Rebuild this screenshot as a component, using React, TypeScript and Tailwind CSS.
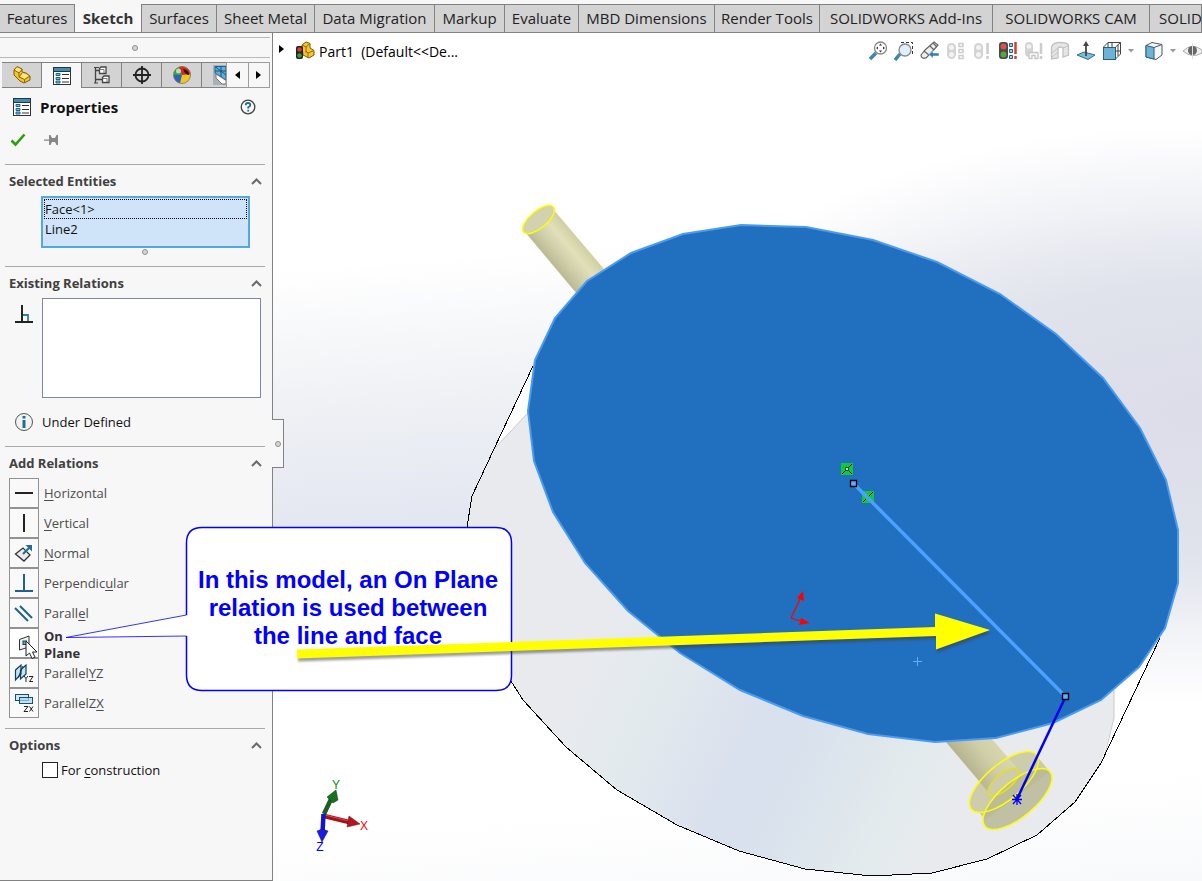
import { useState } from "react";
import type { ReactNode } from "react";

const tabs = [
  { name: "Features", width: "w-[75px]" },
  { name: "Sketch", width: "w-[67px]" },
  { name: "Surfaces", width: "w-[75px]" },
  { name: "Sheet Metal", width: "w-[98px]" },
  { name: "Data Migration", width: "w-[120px]" },
  { name: "Markup", width: "w-[70px]" },
  { name: "Evaluate", width: "w-[74px]" },
  { name: "MBD Dimensions", width: "w-[136px]" },
  { name: "Render Tools", width: "w-[105px]" },
  { name: "SOLIDWORKS Add-Ins", width: "w-[173px]" },
  { name: "SOLIDWORKS CAM", width: "w-[157px]" },
  { name: "SOLID", width: "min-w-[52px] flex-1 pl-[9px] text-left" },
];

const Icon = ({ size = 20, children }: { size?: number; children: ReactNode }) => (
  <svg width={size} height={size} viewBox="0 0 20 20" fill="none" className="block shrink-0" aria-hidden="true">
    {children}
  </svg>
);

const PartIcon = () => (
  <Icon>
    <path d="M2 5 L5 1.500 L10 4 L10 7 L14 8 L18 11 V15 L12 18 L8 16 L2 10 Z" fill="#f5c52b" stroke="#7d5b0b" />
    <path d="M3 5 L5.500 2.500 L9 4.500 L7 7.500 Z M8 11 L10 8 L16.500 10.500 L12.500 14 Z" fill="#ffe680" />
    <path d="M2 5 L7 8 L7 12 L12.500 14.500 L12.500 18 M7 8 L10 4.500 M7 12 L10 8 M12.500 14.500 L18 11" stroke="#8f6a10" />
  </Icon>
);

const PropertiesIcon = () => (
  <Icon>
    <rect x="1.500" y="1.500" width="17" height="17" fill="#fff" stroke="#2f3338" />
    <rect x="2" y="2" width="16" height="3" fill="#3b8fb8" />
    <path d="M2 5.500 H18" stroke="#2f3338" />
    <path d="M4 7.500h4v2h-4z M4 11.500h4v2h-4z M4 15h4v2h-4z" fill="#7cc4e2" stroke="#1d6386" />
    <path d="M10 8.500 H17 M10 12.500 H17 M10 16 H17" stroke="#333" />
  </Icon>
);

const TreeIcon = () => (
  <Icon>
    <path d="M3.500 2 V18 M3.500 5.500 H8 M3.500 14.500 H10" stroke="#444" strokeWidth="1.300" />
    <path d="M2 2.500 H7 M2 18 H6" stroke="#444" />
    <path d="M7.500 3.500 L9 2 H14 V8.500 H7.500 Z M10.500 12.500 L12 11 H17 V17.500 H10.500 Z" fill="#fff" stroke="#444" strokeWidth="1.300" />
    <path d="M7.500 4.500 H12 V8 M10.500 13.500 H15 V17" stroke="#777" />
  </Icon>
);

const TargetIcon = () => (
  <Icon>
    <circle cx="10" cy="10" r="6.500" stroke="#222" strokeWidth="1.800" />
    <path d="M10 1 V19 M1 10 H19" stroke="#222" strokeWidth="1.800" />
  </Icon>
);

const AppearanceIcon = () => (
  <Icon>
    <circle cx="10" cy="10" r="8.500" fill="#f3c51d" />
    <path d="M10 10 L1.500 10 A8.500 8.500 0 0 1 8 2 Z" fill="#2fa34a" />
    <path d="M10 10 L7 2 A8.500 8.500 0 0 1 18.500 9 Z" fill="#d8281f" />
    <path d="M10 10 L1.500 10 A8.500 8.500 0 0 0 8 18.300 Z" fill="#2a62c4" />
    <path d="M11 4 Q16 4 17.500 10 Q13 10 11 4 Z" fill="#3a1010" />
    <circle cx="10" cy="10" r="8.500" stroke="#775" strokeWidth="0.800" />
    <circle cx="6.500" cy="6" r="2.500" fill="#fff" opacity="0.650" />
  </Icon>
);

const CamIcon = () => (
  <svg width="13" height="20" viewBox="0 0 13 20" fill="none" className="block" aria-hidden="true">
    <path d="M0 0 H13 V20 H0 Z" fill="#a9b0b8" />
    <path d="M2 1.500 H13 V15 L2 8 Z" fill="#5fb0dc" stroke="#25648a" />
    <path d="M2 1.500 L13 10 M8 1 V12 M2 6 H13" stroke="#1d5476" />
    <path d="M3 9 L13 15.500 V19 H9 L3 13 Z" fill="#fff" stroke="#777" />
  </svg>
);

const managerTabs = [
  { name: "Feature manager", icon: <PartIcon /> },
  { name: "Property manager", icon: <PropertiesIcon /> },
  { name: "Configuration manager", icon: <TreeIcon /> },
  { name: "Dimension manager", icon: <TargetIcon /> },
  { name: "Display manager", icon: <AppearanceIcon /> },
];

const OnPlaneIcon = () => (
  <Icon>
    <path d="M5.500 6.500 L15 3 V14 L5.500 17 Z" fill="#f2f2f2" stroke="#333" />
    <rect x="9" y="8" width="3.500" height="3.500" fill="#5aa7cc" stroke="#12455f" />
  </Icon>
);

const ParallelYZIcon = () => (
  <Icon>
    <path d="M1.500 7 L7 2 V11 L1.500 17 Z M6.500 7 L12 2 V11 L6.500 16 Z" fill="#b8deee" fillOpacity="0.800" stroke="#123f5a" strokeWidth="1.200" />
    <path d="M4 15 L9 3" stroke="#123f5a" />
    <path d="M10 13 l2 2.500 l2 -2.500 M12 15.500 V19 M15 13.500 H19 L15.500 18.500 H19" stroke="#222" />
  </Icon>
);

const ParallelZXIcon = () => (
  <Icon>
    <rect x="1.500" y="1.500" width="13" height="6" fill="#cfe8f5" stroke="#15516f" />
    <rect x="5.500" y="4.500" width="13" height="6" fill="#a9d8ee" fillOpacity="0.700" stroke="#15516f" />
    <path d="M10 13.500 H14 L10 18.500 H14 M15.500 13.500 L19 18.500 M19 13.500 L15.500 18.500" stroke="#222" />
  </Icon>
);

// before / key / after: the key letter is underlined
const relations = [
  { before: "", key: "H", after: "orizontal", icon: <Icon><path d="M1 10 H19" stroke="#222" strokeWidth="2" /></Icon> },
  { before: "", key: "V", after: "ertical", icon: <Icon><path d="M10 1 V19" stroke="#222" strokeWidth="2" /></Icon> },
  {
    before: "", key: "N", after: "ormal",
    icon: (
      <Icon>
        <path d="M1.500 11 L9 5 L16 12 L10 18 Z" fill="#ececec" stroke="#333" strokeWidth="1.300" />
        <path d="M9 11 L15 5" stroke="#1f6f94" strokeWidth="2.200" />
        <path d="M11.500 2 H18 V8.500 Z" fill="#1f6f94" />
      </Icon>
    ),
  },
  { before: "Perpendic", key: "u", after: "lar", icon: <Icon><path d="M10 1 V18 M1 18 H19" stroke="#1f6385" strokeWidth="2" /></Icon> },
  { before: "Parall", key: "e", after: "l", icon: <Icon><path d="M1 5 L14 18 M6 3 L18 15" stroke="#1f6385" strokeWidth="2" /></Icon> },
  { before: "", key: "", after: "On Plane", icon: <OnPlaneIcon />, active: true },
  { before: "Parallel", key: "Y", after: "Z", icon: <ParallelYZIcon /> },
  { before: "ParallelZ", key: "X", after: "", icon: <ParallelZXIcon /> },
];

const Section = ({ title, children }: { title: string; children: ReactNode }) => {
  const [open, setOpen] = useState(true);

  return (
    <section className="ml-[5px] mr-[7px] border-t border-[#a8a8a8] pb-[10px]">
      <button onClick={() => setOpen(!open)} className="flex h-[31px] w-full items-center justify-between pl-1 pr-[3px] pt-[2px] text-[13px] font-bold text-[#404040]">
        {title}
        <svg width="11" height="7" viewBox="0 0 11 7" fill="none" aria-hidden="true">
          <path d="M1 6 L5.500 1.500 L10 6" stroke="#6b6b6b" strokeWidth="2" />
        </svg>
      </button>
      {open && children}
    </section>
  );
};

const Dot = () => <span className="block size-[6px] rounded-full border border-[#8f8f8f] bg-[#d6d6d6]" />;

const PropertyPanel = () => {
  const [construction, setConstruction] = useState(false);

  return (
    <aside className="relative z-10 w-[273px] shrink-0 border-b border-r border-[#828282] bg-[#f7f7f7] text-[13px] text-[#111]">
      <div className="mr-[2px] mt-1 flex h-[21px] items-center justify-center border-y border-[#b9b9b9]"><Dot /></div>

      <div className="ml-[2px] mr-[2px] mt-1 flex h-[26px]">
        {managerTabs.map((tab, i) => (
          <button
            key={tab.name}
            aria-label={tab.name}
            className={`flex w-10 shrink-0 items-center justify-center border-r border-t border-[#828282] ${i === 1 ? "bg-[#f7f7f7]" : "border-b bg-[#d3d3d3]"}`}
          >
            {tab.icon}
          </button>
        ))}
        <button aria-label="CAM manager" className="flex w-6 items-center justify-end overflow-hidden border-b border-t border-[#828282] bg-[#d3d3d3]">
          <CamIcon />
        </button>
        <button aria-label="Scroll left" className="flex flex-1 items-center justify-center border border-[#9d9d9d] bg-[#f7f7f7]">
          <svg width="5" height="8" viewBox="0 0 5 8"><path d="M5 0 V8 L0 4 Z" /></svg>
        </button>
        <button aria-label="Scroll right" className="flex flex-1 items-center justify-center border-y border-r border-[#9d9d9d] bg-[#f7f7f7]">
          <svg width="5" height="8" viewBox="0 0 5 8"><path d="M0 0 V8 L5 4 Z" /></svg>
        </button>
      </div>

      <div className="flex h-[38px] items-center pl-3 pr-4">
        <PropertiesIcon />
        <h1 className="ml-2 flex-1 text-[15px] font-bold">Properties</h1>
        <button aria-label="Help">
          <svg width="16" height="16" viewBox="0 0 16 16" fill="none" className="block">
            <circle cx="8" cy="8" r="6.800" fill="#fafafa" stroke="#444" strokeWidth="1.300" />
            <path d="M5.700 6.300 Q5.700 4 8 4 Q10.300 4 10.300 6 Q10.300 7.200 8.200 8.300 V9.500 M8.200 10.700 V12.500" stroke="#1f6f94" strokeWidth="1.800" />
          </svg>
        </button>
      </div>

      <div className="mb-[10px] flex h-7 items-center gap-[18px] pl-[10px]">
        <button aria-label="OK">
          <svg width="16" height="14" viewBox="0 0 16 14" fill="none" className="block"><path d="M1.500 7.500 L5.500 11.500 L14.500 1.500" stroke="#2f9e0d" strokeWidth="2.600" /></svg>
        </button>
        <button aria-label="Keep visible">
          <svg width="14" height="12" viewBox="0 0 14 12" className="block" fill="#888">
            <path d="M0 5.500 H5 V1 H6.500 L8 4 H11 L12.500 1 H14 V11 H12.500 L11 8 H8 L6.500 11 H5 V6.800 H0 Z" />
          </svg>
        </button>
      </div>

      <Section title="Selected Entities">
        <ul role="listbox" aria-label="Selected Entities" className="ml-9 h-[52px] w-[209px] border-2 border-[#51a9e0] bg-[#cfe4f8] p-px leading-[18px]">
          <li role="option" aria-selected="true" className="border border-dotted border-black">Face&lt;1&gt;</li>
          <li role="option" aria-selected="true" className="border border-transparent">Line2</li>
        </ul>
        <div className="ml-[35px] flex h-2 w-[209px] items-center justify-center"><Dot /></div>
      </Section>

      <Section title="Existing Relations">
        <div className="flex gap-2 pl-[9px]">
          <div className="pt-[7px]">
            <Icon>
              <path d="M8 0 V17" stroke="#222" strokeWidth="2" />
              <path d="M9 10 H14 V16" stroke="#2b7fa3" strokeWidth="1.800" />
              <path d="M1 17 H19" stroke="#222" strokeWidth="2" />
            </Icon>
          </div>
          <select size={4} aria-label="Existing Relations" className="h-[100px] w-[219px] border border-[#7f88a3] bg-white" />
        </div>
        <p className="-mb-[10px] flex h-12 items-center gap-2 pl-[9px]">
          <Icon>
            <circle cx="10" cy="10" r="8.500" fill="#f2f2f2" stroke="#555" />
            <path d="M10 4 V6.500 M10 8 V16" stroke="#1f6f94" strokeWidth="3" />
          </Icon>
          <span className="pt-[2px]">Under Defined</span>
        </p>
      </Section>

      <Section title="Add Relations">
        <div className="ml-1 flex flex-col items-start text-[#4c4c4c]">
          {relations.map((rel) => (
            <button key={rel.before + rel.key + rel.after} className="flex h-[30px] items-center gap-[5px] text-left">
              <span className={`flex size-[30px] items-center justify-center border border-[#929292] ${rel.active ? "bg-white" : "bg-[#f9f9f9]"}`}>
                {rel.icon}
              </span>
              {rel.active ? (
                <span className="w-12 self-start font-bold leading-[17px] text-[#333]">{rel.after}</span>
              ) : (
                <span className="pt-[2px]">{rel.before}<span className="underline underline-offset-2">{rel.key}</span>{rel.after}</span>
              )}
            </button>
          ))}
        </div>
      </Section>

      <Section title="Options">
        <label className="ml-[37px] flex h-5 items-center gap-[3px]">
          <input
            type="checkbox"
            checked={construction}
            onChange={(e) => setConstruction(e.target.checked)}
            className="size-4 appearance-none border border-[#222] bg-white checked:bg-[#3b8fb8]"
          />
          <span className="pt-[2px]">For <span className="underline underline-offset-2">c</span>onstruction</span>
        </label>
      </Section>

      {/* Splitter handle */}
      <div className="absolute left-[272px] top-[386px] flex h-[49px] w-3 items-center justify-center border-y border-r border-[#828282] bg-[#f7f7f7]"><Dot /></div>
    </aside>
  );
};

const Caret = () => <svg width="6" height="4" viewBox="0 0 6 4" fill="#999" aria-hidden="true"><path d="M0 0 H6 L3 3.500 Z" /></svg>;

const ViewToolbar = () => (
  <div className="flex shrink-0 items-center gap-[6px]">
    <button aria-label="Zoom to fit">
      <Icon>
        <path d="M2 18 L8 12" stroke="#3d87ad" strokeWidth="3.500" />
        <circle cx="12.500" cy="7" r="6" fill="#fff" stroke="#888" strokeWidth="1.300" />
        <path d="M12.500 2.500 l1.500 2 h-3z M12.500 11.500 l1.500 -2 h-3z M8 7 l2 -1.500 v3z M17 7 l-2 -1.500 v3z" fill="#333" />
      </Icon>
    </button>
    <button aria-label="Zoom to area">
      <Icon>
        <path d="M7 1.500 H18.500 V14" stroke="#333" strokeDasharray="3 2" />
        <path d="M1 19 L6 13" stroke="#3d87ad" strokeWidth="3.500" />
        <circle cx="11" cy="9" r="6" fill="#dff0f8" stroke="#888" strokeWidth="1.300" />
      </Icon>
    </button>
    <button aria-label="Previous view">
      <Icon>
        <path d="M1 14 L5 9 L14 1 L18 4 L11 12 L6 17 Q1 18 1 14 Z" fill="#eee" stroke="#666" strokeWidth="1.200" />
        <path d="M4 10 L9 14 M10 5 L14 9 M13 2 L17 6" stroke="#666" strokeWidth="1.200" />
        <path d="M9 13.500 L13 9.500 V12 H19 V15 H13 V17.500 Z" fill="#3182ab" stroke="#fff" strokeWidth="0.500" />
      </Icon>
    </button>
    <button aria-label="Section list">
      <Icon>
        <rect x="1" y="2" width="9" height="16" rx="4.500" fill="#d4d4d4" />
        <circle cx="5.500" cy="6.500" r="2.500" fill="#f3f3f3" /><circle cx="5.500" cy="13.500" r="2.500" fill="#f3f3f3" />
        <path d="M13 2.500h4v3h-4z M13 8.500h4v3h-4z M13 14.500h4v3h-4z" stroke="#ccc" strokeWidth="1.500" />
      </Icon>
    </button>
    <button aria-label="Rebuild alert">
      <Icon>
        <rect x="2" y="2" width="9" height="16" rx="4.500" fill="#d4d4d4" />
        <circle cx="6.500" cy="6.500" r="2.500" fill="#f3f3f3" /><circle cx="6.500" cy="13.500" r="2.500" fill="#f3f3f3" />
        <path d="M15.500 2 V13 M15.500 15 V18" stroke="#ccc" strokeWidth="2.500" />
      </Icon>
    </button>
    <button aria-label="Rebuild status">
      <Icon>
        <rect x="1" y="1" width="9" height="17" rx="3" fill="#4a4a4a" />
        <circle cx="5.500" cy="5.500" r="3" fill="#dd5247" /><circle cx="5.500" cy="13.500" r="3" fill="#56a63a" />
        <path d="M11.500 2.500h3v3h-3z M11.500 8.500h3v3h-3z M11.500 14.500h3v3h-3z" fill="#9cd2ea" stroke="#245c7c" />
        <path d="M17.500 1 V13 M17.500 15 V18" stroke="#d3402f" strokeWidth="2.500" />
      </Icon>
    </button>
    <button aria-label="Dimension alert">
      <Icon>
        <rect x="1" y="1" width="8" height="15" rx="4" fill="#d4d4d4" />
        <circle cx="5" cy="5.500" r="2.300" fill="#f3f3f3" />
        <path d="M5 17.500 V11.500 H14 V17.500 H11 V14.500 H8 V17.500 Z" fill="#f7f7f7" stroke="#c6c6c6" strokeWidth="1.300" />
        <path d="M17 2 V13 M17 15 V18" stroke="#ccc" strokeWidth="2.500" />
      </Icon>
    </button>
    <button aria-label="Section view">
      <Icon>
        <path d="M1.500 6 Q3 1.500 10 1.500 Q17 1.500 18.500 4 V14 L13 16 V7 Q10 5 8 7 V17 L1.500 18 Z" fill="#e6e6e6" stroke="#c2c2c2" strokeWidth="1.300" />
        <path d="M2 12 L8 7 M2 16 L8 11 M13 7 L18 5" stroke="#c2c2c2" />
      </Icon>
    </button>
    <button aria-label="Normal to">
      <Icon>
        <path d="M1 14 L8 11 L19 14 L12 18.500 Z" fill="#79bcdc" stroke="#2e7191" />
        <path d="M10 15 V3" stroke="#444" strokeWidth="1.800" />
        <path d="M7 5 L10 0 L13 5 Z" fill="#444" />
      </Icon>
    </button>
    <button aria-label="View orientation">
      <Icon>
        <path d="M1.500 6 L6 1.500 H18.500 V13 L13.500 18 M6 1.500 V6 M13.500 6 L18.500 1.500 M10 1.500 V6 M14 10 H18.500 M16 4 V15" stroke="#444" />
        <rect x="1.500" y="6.500" width="12" height="12" fill="#6cb3d6" stroke="#24617f" />
      </Icon>
    </button>
    <Caret />
    <button aria-label="Display style" className="ml-1">
      <Icon>
        <path d="M2 4.500 L8 1.500 L18 3.500 V14 L12 18.500 L2 16 Z" fill="#f2f7fa" stroke="#555" />
        <path d="M2 4.500 L10 6.500 V18 L2 16 Z" fill="#6cb3d6" stroke="#24617f" />
        <path d="M10 6.500 L18 3.500" stroke="#555" />
      </Icon>
    </button>
    <Caret />
    <button aria-label="Hide or show items">
      <Icon>
        <path d="M1 10 Q10 1 20 9 V12 Q10 18 1 10 Z" fill="#eee" stroke="#aaa" />
        <circle cx="10.500" cy="9.500" r="4.500" fill="#666" />
        <path d="M10.500 2 V18" stroke="#ddd" />
      </Icon>
    </button>
  </div>
);

const disc = "741,225 806,227 873,240 937,262 1000,294 1056,334 1103,378 1140,428 1166,480 1178,530 1178,583 1165,628 1139,667 1101,700 1053,723 996,738 935,742 868,734 803,716 740,690 680,653 628,611 585,563 553,512 534,461 528,411 535,360 555,318 587,281 631,253 683,234";

const Model = () => (
  <svg width="929" height="848" viewBox="273 33 929 848" fill="none" className="absolute left-0 top-0" aria-label="Part model">
    <defs>
      <linearGradient id="side" gradientUnits="userSpaceOnUse" x1="520" y1="600" x2="962" y2="811">
        <stop offset="0.150" stopColor="#e9eaee" />
        <stop offset="0.320" stopColor="#e3eaed" />
        <stop offset="0.560" stopColor="#d9e0ee" />
        <stop offset="0.680" stopColor="#dae2ed" />
        <stop offset="0.870" stopColor="#e3ebed" />
        <stop offset="1" stopColor="#e9eaee" />
      </linearGradient>
      <linearGradient id="pin" gradientUnits="userSpaceOnUse" x1="526" y1="232" x2="553" y2="209">
        <stop offset="0" stopColor="#bcbb94" />
        <stop offset="0.300" stopColor="#cfceaa" />
        <stop offset="0.650" stopColor="#e1e0b8" />
        <stop offset="1" stopColor="#d0cfa3" />
      </linearGradient>
      <linearGradient id="pinLow" gradientUnits="userSpaceOnUse" x1="960" y1="760" x2="997" y2="733">
        <stop offset="0" stopColor="#b4b38e" />
        <stop offset="0.500" stopColor="#cfcea8" />
        <stop offset="1" stopColor="#dad9b0" />
      </linearGradient>
    </defs>

    {/* Cylinder side */}
    <path d="M533 366 L494 449 L472 496 L467 527 L470 590 L490 648 L523 700 L566 747 L617 790 L677 825 L739 851 L805 869 L872 876 L932 873 L987 859 L1037 835 L1075 802 L1101 763 L1160 638 Z" fill="#fff" />
    <path d="M528 413 L494 449 L472 496 L467 527 L470 590 L490 648 L523 700 L566 747 L617 790 L677 825 L739 851 L805 869 L872 876 L932 873 L987 859 L1037 835 L1075 802 L1101 763 L1114 718 V600 Z" fill="url(#side)" />
    <path d="M528 413 L494 449 M1114 690 V718 L1104 758" stroke="#c8c8c8" />
    <path d="M533 366 L494 449 L472 496 L467 527 L470 590 L490 648 L523 700 L566 747 L617 790 L677 825 L739 851 L805 869 L872 876 L932 873 L987 859 L1037 835 L1075 802 L1101 763 L1160 638" stroke="#000" shapeRendering="crispEdges" />

    {/* Pin, upper end */}
    <path d="M525 232 L577 294 L604 269 L553 209 Z" fill="url(#pin)" />
    <ellipse cx="538.500" cy="219.500" rx="19.500" ry="8.500" transform="rotate(-40 538.500 219.500)" fill="#d3d2ae" stroke="#ff0" strokeWidth="1.500" />

    {/* Pin, lower end with its flange */}
    <path d="M972 803 L985 820 L1050 772 L1036 755 Z" fill="#cbcaa8" />
    <ellipse cx="1004" cy="782" rx="42.500" ry="17.700" transform="rotate(-40 1004 782)" fill="#cdccac" />
    <path d="M940 735 L990 794 L1018 769 L985 731 Z" fill="url(#pinLow)" />
    <ellipse cx="1003.500" cy="782" rx="19" ry="8" transform="rotate(-40 1003.500 782)" fill="#cdccac" />
    <ellipse cx="1017.500" cy="799" rx="42.500" ry="17.700" transform="rotate(-40 1017.500 799)" fill="#b9b897" fillOpacity="0.850" />
    <g stroke="#ff0" strokeWidth="1.500">
      <ellipse cx="1004" cy="782" rx="42.500" ry="17.700" transform="rotate(-40 1004 782)" />
      <ellipse cx="1003.500" cy="782" rx="19" ry="8" transform="rotate(-40 1003.500 782)" stroke="#e3e11a" />
      <ellipse cx="1017.500" cy="799" rx="42.500" ry="17.700" transform="rotate(-40 1017.500 799)" />
    </g>

    {/* Selected face */}
    <polygon points={disc} fill="#216fbf" stroke="#4b9bf0" strokeWidth="2" />

    {/* Sketch lines */}
    <path d="M841 463h12v12h-12z M862 491h12v12h-12z" fill="#0dc93b" />
    <path d="M842 474 L852 464 M848 470 L852 474 M863 502 L873 492 M869 498 L873 502" stroke="#000" />
    <path d="M845.500 467.500h3v3h-3z" fill="#bdb" stroke="#345" />
    <path d="M853 483 L1065 696" stroke="#4ba1ff" strokeWidth="3.500" />
    <path d="M1065 698 L1017 799" stroke="#0000f0" strokeWidth="2.500" />
    <path d="M1017 794 V805 M1012 799.500 H1022 M1013 795 L1021 804 M1021 795 L1013 804" stroke="#00f" strokeWidth="1.300" />
    <path d="M850.500 480.500h6v6h-6z M1062.500 693.500h6v6h-6z" fill="#62acff" stroke="#000" strokeWidth="1.300" />
    <path d="M917.500 657 V666 M913 661.500 H922" stroke="#62acff" />
    <path d="M791 618 L801 597 M791 618 L800 621" stroke="#f00" strokeWidth="1.300" />
    <path d="M803 591 L804 601 L797 598 Z M810 623 L799 625 L801 618 Z" fill="#f00" />

    {/* Orientation triad */}
    <path d="M324 816 L349 822" stroke="#a31319" strokeWidth="4.500" />
    <path d="M325 815 L349 821" stroke="#e04a4a" />
    <path d="M349 816 L360 824 L347 827 Z" fill="#b3161b" stroke="#6d0e12" strokeWidth="0.500" />
    <path d="M324 814 L332 797" stroke="#1b5f22" strokeWidth="4.500" />
    <path d="M336 790 L338 800 L333 803 L327 797 Z" fill="#187021" stroke="#0b3b10" strokeWidth="0.500" />
    <path d="M323.500 814 L322.500 833" stroke="#1515c9" strokeWidth="4.500" />
    <path d="M317 831 L322 829 L328 831 L322 842 Z" fill="#1d1de0" stroke="#0a0a78" strokeWidth="0.500" />
    <g fontSize="12" textAnchor="middle" fontFamily="Liberation Sans, sans-serif">
      <text x="336" y="789" fill="#0a8f14">Y</text>
      <text x="364" y="830" fill="#f00">X</text>
      <text x="320" y="851" fill="#00f">Z</text>
    </g>
  </svg>
);

const App = () => {
  const [activeTab, setActiveTab] = useState("Sketch");

  return (
    <div className="relative flex min-h-screen flex-col overflow-hidden bg-[#f7f7f7] font-['Open_Sans',sans-serif]">
      <nav className="flex pt-1 text-[15px] text-[#222]">
        {tabs.map((tab) => (
          <button
            key={tab.name}
            onClick={() => setActiveTab(tab.name)}
            className={`h-[29px] shrink-0 whitespace-nowrap border-b border-r border-[#828282] ${tab.width} ${activeTab === tab.name ? "bg-[#f7f7f7] font-bold text-[#333]" : "border-t bg-[#d3d3d3]"}`}
          >
            {tab.name}
          </button>
        ))}
      </nav>

      <div className="flex flex-1">
        <PropertyPanel />
        <main className="relative min-w-0 flex-1 bg-[linear-gradient(176deg,#ffffff_0%,#ffffff_26%,#eef0f4_42%,#e2e6f1_56%,#ffffff_72%,#ffffff_88%,#f8f9fb_100%)]">
          <div className="absolute inset-0 bg-[radial-gradient(ellipse_60%_34%_at_100%_45%,#dcdde8_0%,#dfe1eb_40%,transparent_100%)]" />
          <Model />
          <div className="relative flex h-8 items-center justify-between pl-1 pt-1">
            <div className="flex items-center text-[14px] text-black">
              <svg width="6" height="8" viewBox="0 0 6 8" className="mb-1 ml-[2px] mr-[10px]"><path d="M0 0 V8 L5 4 Z" /></svg>
              <Icon>
                <path d="M7 4 L11 1 L15 2.500 V7 L19 9.500 V14 L14 17 L8 14 Z" fill="#f5c52b" stroke="#7d5b0b" />
                <path d="M7 4 L11 6 V12 M11 6 L15 2.500 M13 12 V17 M11 10 L13 12 L19 9.500" stroke="#8f6a10" />
                <rect x="1" y="5" width="7" height="13" rx="2" fill="#222" />
                <circle cx="4.500" cy="8.500" r="2.300" fill="#d83a2e" /><circle cx="4.500" cy="14.500" r="2.300" fill="#3b9b35" />
              </Icon>
              <span className="ml-1 whitespace-pre">Part1  (Default&lt;&lt;De...</span>
            </div>
            <ViewToolbar />
          </div>
        </main>
      </div>

      {/* Callout over both panes */}
      <svg width="1202" height="881" viewBox="0 0 1202 881" className="pointer-events-none absolute left-0 top-0 z-20" aria-hidden="true">
        <path d="M202 527.500 H496 Q511.500 527.500 511.500 543 V675 Q511.500 690.500 496 690.500 H202 Q186.500 690.500 186.500 675 V636 L66 637.500 L186.500 615 V543 Q186.500 527.500 202 527.500 Z" fill="#fff" />
        <path d="M186.500 615 V543 Q186.500 527.500 202 527.500 H496 Q511.500 527.500 511.500 543 V675 Q511.500 690.500 496 690.500 H202 Q186.500 690.500 186.500 675 V636" fill="none" stroke="#00f" strokeWidth="1.500" />
        <path d="M186.500 636 L66 637.500 L186.500 615" fill="none" stroke="#00f" strokeWidth="0.800" />
      </svg>
      <p className="absolute left-[186px] top-[566px] z-20 w-[324px] text-center font-['Liberation_Sans',sans-serif] text-[24px] font-bold leading-[28px] text-[#0000ff]">
        In this model, an On Plane<br />relation is used between<br />the line and face
      </p>
      <svg width="1202" height="881" viewBox="0 0 1202 881" className="pointer-events-none absolute left-0 top-0 z-20 drop-shadow-[1px_3px_1px_rgba(60,60,60,0.5)]" aria-hidden="true">
        <path d="M297 649.500 L935 627 V613.500 L990 630 L936 649.500 V636 L297 658.500 Z" fill="#ff0" />
      </svg>
      <svg width="13" height="20" viewBox="0 0 13 20" className="pointer-events-none absolute left-[25px] top-[640px] z-20" aria-hidden="true">
        <path d="M1 1 V16 L4.500 13 L7 18.500 L10 17 L7.500 12 H12 Z" fill="#fff" stroke="#222" />
      </svg>
    </div>
  );
};

export default App;
